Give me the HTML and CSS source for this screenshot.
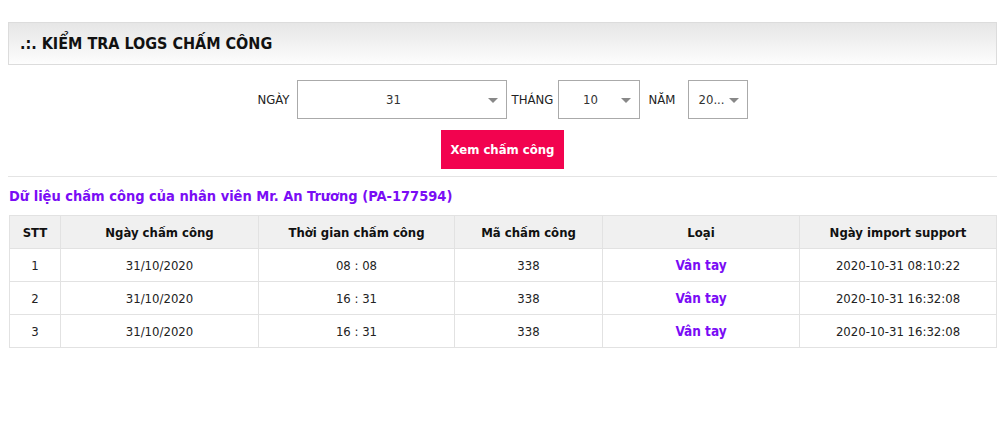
FILE: index.html
```html
<!DOCTYPE html>
<html lang="vi">
<head>
<meta charset="utf-8">
<title>Kiểm tra logs chấm công</title>
<link rel="stylesheet" href="styles.css">
</head>
<body>
<div class="panel-head">.:. KIỂM TRA LOGS CHẤM CÔNG</div>
<div class="filters">
  <span class="lbl lbl-day">NGÀY</span>
  <div class="sel sel-day"><span class="val">31</span><span class="arrow"></span></div>
  <span class="lbl lbl-month">THÁNG</span>
  <div class="sel sel-month"><span class="val">10</span><span class="arrow"></span></div>
  <span class="lbl lbl-year">NĂM</span>
  <div class="sel sel-year"><span class="val">20...</span><span class="arrow"></span></div>
</div>
<div class="actions"><button class="btn">Xem chấm công</button></div>
<div class="sep"></div>
<div class="subtitle">Dữ liệu chấm công của nhân viên Mr. An Trương (PA-177594)</div>
<table class="grid">
  <colgroup>
    <col class="c1"><col class="c2"><col class="c3"><col class="c4"><col class="c5"><col class="c6">
  </colgroup>
  <thead>
    <tr><th>STT</th><th>Ngày chấm công</th><th>Thời gian chấm công</th><th>Mã chấm công</th><th>Loại</th><th>Ngày import support</th></tr>
  </thead>
  <tbody>
    <tr><td>1</td><td>31/10/2020</td><td>08 : 08</td><td>338</td><td class="type">Vân tay</td><td>2020-10-31 08:10:22</td></tr>
    <tr><td>2</td><td>31/10/2020</td><td>16 : 31</td><td>338</td><td class="type">Vân tay</td><td>2020-10-31 16:32:08</td></tr>
    <tr><td>3</td><td>31/10/2020</td><td>16 : 31</td><td>338</td><td class="type">Vân tay</td><td>2020-10-31 16:32:08</td></tr>
  </tbody>
</table>
</body>
</html>
```
FILE: styles.css
```css
html, body { background: #fff; }
body {
  margin: 8px;
  font-family: "DejaVu Sans Condensed", "DejaVu Sans", sans-serif;
  font-size: 13px;
  color: #222;
}
.panel-head {
  margin-top: 14px;
  height: 41px;
  border: 1px solid #dcdcdc;
  background: linear-gradient(#e6e6e6, #fdfdfd);
  display: flex;
  align-items: center;
  padding-left: 11px;
  font-weight: bold;
  font-size: 16px;
  color: #111;
}
.filters {
  margin-top: 15px;
  display: flex;
  justify-content: center;
  align-items: center;
}
.lbl { font-size: 13px; color: #222; white-space: nowrap; }
.lbl-day { width: 35px; margin-right: 4px; }
.lbl-month { width: 42px; margin-left: 5px; margin-right: 4px; }
.lbl-year { width: 35px; margin-left: 9px; margin-right: 4px; }
.sel {
  box-sizing: border-box;
  height: 39px;
  border: 1px solid #aaa;
  display: flex;
  align-items: center;
  position: relative;
}
.sel .val { flex: 1; text-align: center; padding-right: 16px; font-size: 13px; color: #333; }
.sel .arrow {
  position: absolute;
  right: 8px;
  top: 17px;
  width: 0; height: 0;
  border-left: 5px solid transparent;
  border-right: 5px solid transparent;
  border-top: 5px solid #888;
}
.sel-day { width: 210px; }
.sel-month { width: 82px; }
.sel-year { width: 60px; }
.sel-year .val { text-align: left; padding-left: 10px; }
.actions { display: flex; justify-content: center; margin-top: 11px; }
.btn {
  width: 123px;
  height: 39px;
  border: none;
  background: #f2034f;
  color: #fff;
  font-family: inherit;
  font-weight: bold;
  font-size: 13px;
  padding: 0;
}
.sep { height: 1px; background: #e4e4e4; margin-top: 7px; }
.subtitle {
  margin-top: 11px;
  margin-left: 1px;
  color: #7a0cf5;
  font-weight: bold;
  font-size: 14.5px;
  line-height: 17px;
}
.grid {
  margin-top: 10px;
  margin-left: 1px;
  width: 987px;
  border-collapse: collapse;
  table-layout: fixed;
}
.c1 { width: 51px; } .c2 { width: 198px; } .c3 { width: 196px; }
.c4 { width: 148px; } .c5 { width: 197px; } .c6 { width: 197px; }
.grid th, .grid td {
  border: 1px solid #e2e2e2;
  height: 32px;
  padding: 0 4px;
  text-align: center;
  vertical-align: middle;
  font-size: 13px;
}
.grid th { background: #f0f0f0; font-weight: bold; color: #111; }
.grid td { color: #222; }
.grid td.type { color: #7a0cf5; font-weight: bold; font-size: 13.5px; }
```
